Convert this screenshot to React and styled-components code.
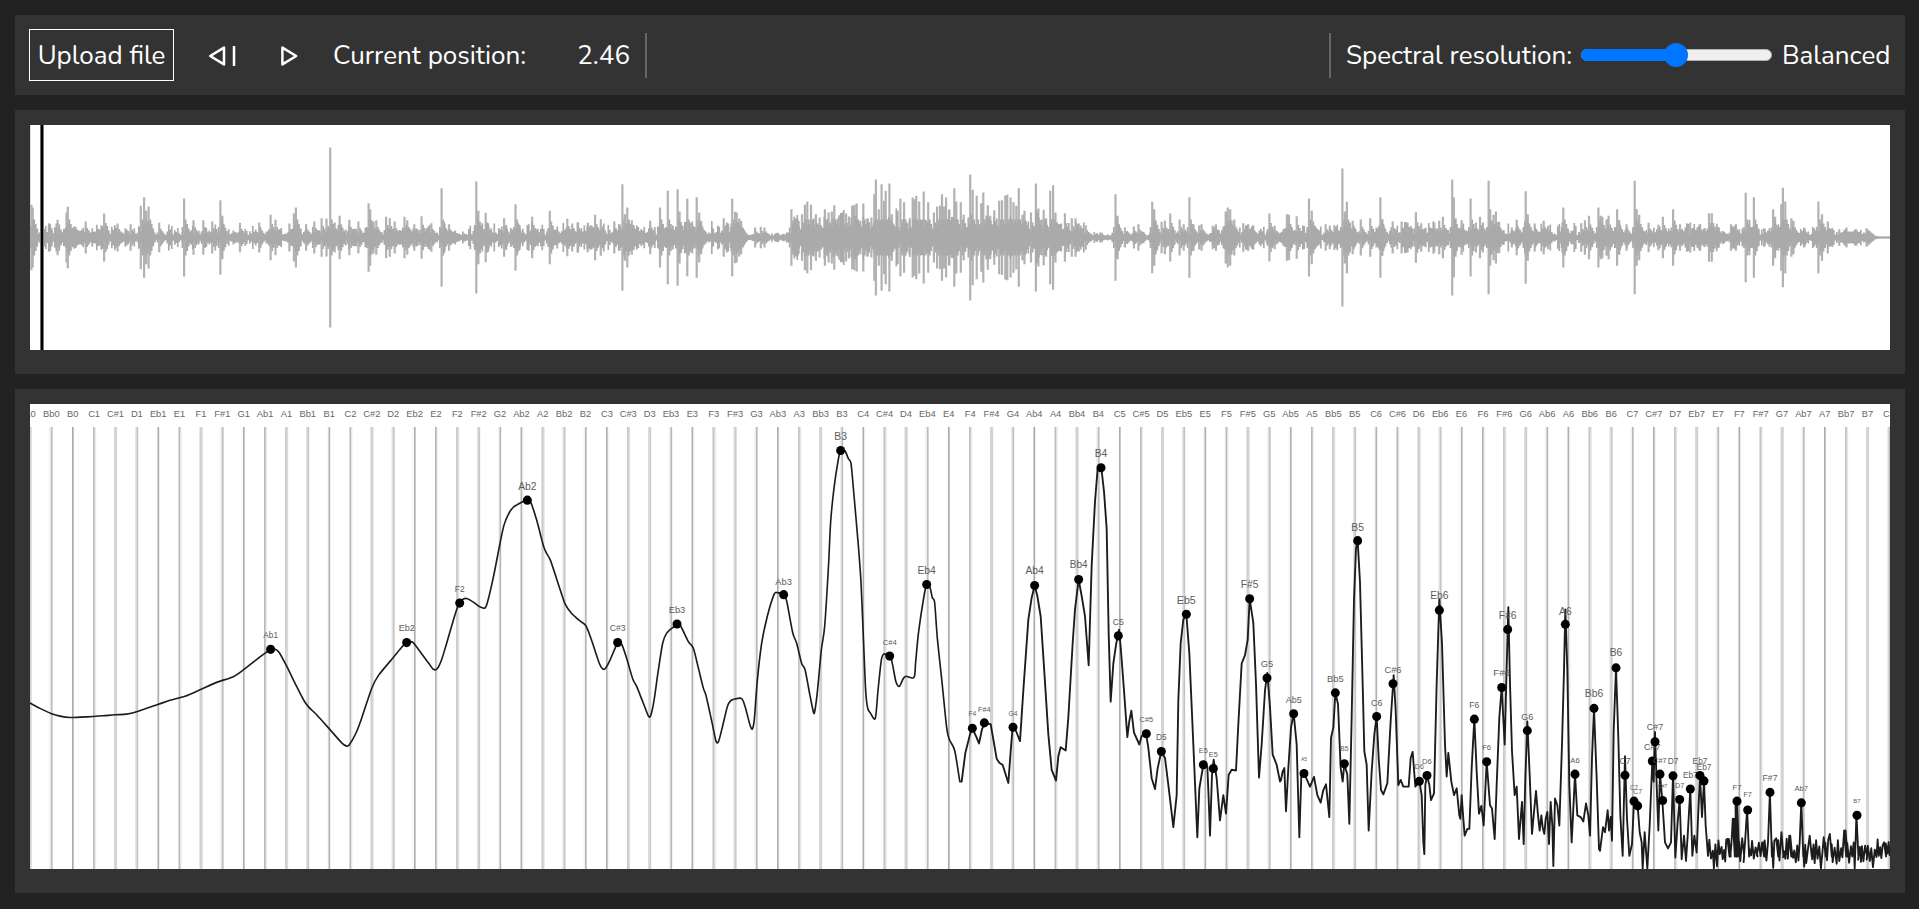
import React from "react";
import styled, { createGlobalStyle } from "styled-components";

const GlobalStyle = createGlobalStyle`
  * { box-sizing: border-box; }
  body {
    margin: 0;
    background: #222;
    color: #fff;
    font-family: Nunito, Lato, "Open Sans", sans-serif;
    font-size: 26px;
    overflow: hidden;
  }
`;

const Page = styled.main`
  display: flex;
  flex-direction: column;
  gap: 15px;
  height: 909px;
  padding: 15px 14px 16px 15px;
`;

const Toolbar = styled.header`
  display: flex;
  align-items: center;
  justify-content: space-between;
  height: 80px;
  padding: 0 16px 0 14px;
  background: #333;
  white-space: nowrap;
`;

const Group = styled.div`
  display: flex;
  align-items: center;
  height: 52px;
`;

const UploadButton = styled.button`
  width: 145px;
  height: 52px;
  padding: 0;
  border: 1px solid #fff;
  background: transparent;
  color: inherit;
  font: inherit;
`;

const IconButton = styled.button`
  display: flex;
  align-items: center;
  justify-content: center;
  width: ${(p) => p.$width}px;
  height: 52px;
  margin-left: ${(p) => p.$gap}px;
  padding: 2px 0 0;
  border: 0;
  background: transparent;
  color: inherit;
`;

const Label = styled.span`
  display: inline-block;
  width: ${(p) => p.$width}px;
  margin-left: ${(p) => p.$gap}px;
  text-align: ${(p) => p.$align || "left"};
`;

const Divider = styled.span`
  width: 2px;
  height: 45px;
  margin-left: ${(p) => p.$gap || 0}px;
  background: #666;
`;

const Slider = styled.div`
  display: flex;
  align-items: center;
  width: 191px;
  height: 12px;
  margin-left: 9px;
  border: 1px solid #b2b2b2;
  border-radius: 6px;
  background: #efefef;
`;

const SliderFill = styled.div`
  width: 50%;
  flex: none;
  height: 12px;
  margin-left: -1px;
  border-radius: 6px 0 0 6px;
  background: #0075ff;
`;

const SliderThumb = styled.div`
  width: 24px;
  height: 24px;
  flex: none;
  margin-left: -12px;
  border-radius: 50%;
  background: #0075ff;
`;

const Panel = styled.section`
  padding: 15px 15px 24px;
  background: #333;
`;

const Canvas = styled.svg`
  display: block;
  width: 1860px;
  height: ${(p) => p.$height}px;
  background: #fff;
  font-family: "Liberation Sans", Arial, sans-serif;
`;

function random(seed) {
  let s = seed;
  return () => {
    s = (s * 1664525 + 1013904223) % 4294967296;
    return s / 4294967296;
  };
}

/* Transients of the recording: position and amplitude, in three slices. */
const SLICES = [
  [0, "77,98 80,90 166,92 163,75 141,53 120,42 210,48 255,72 288,42 320,40 345,95 353,121 358,80 364,93 368,50 390,44 451,117 474,52 498,52 520,48 540,112 545,65 588,44 635,45 663,68 675,53 709,42 720,72 725,90 750,40 770,48 788,58 800,57 809,270 820,45 832,65 856,53 878,48 903,103 907,85 915,48 922,52 946,62 955,58 967,48 991,62 998,52 1015,40 1033,64 1057,43 1082,148 1088,47 1100,40 1167,168 1172,80 1190,74 1235,58 1263,100 1268,45 1304,62 1347,80 1390,56 1402,42 1415,46 1440,44 1458,68 1472,55 1505,48 1518,40 1525,160 1531,70 1537,90 1548,52"],
  [640, "25,50 49,90 68,140 92,145 97,78 116,116 124,45 139,121 145,75 150,50 205,58 226,116 233,77 237,75 243,57 248,50 282,30 296,32 305,30 371,85 378,52 386,55 397,70 404,98 410,107 419,98 431,70 440,60 453,85 462,75 470,78 476,97 488,67 496,70 505,72 512,63 520,95 525,98 531,102 540,50 547,102 557,58 567,60 574,130 578,174 585,85 592,160 598,110 602,140 611,162 617,70 638,116 647,106 660,50 668,120 673,115 677,125 684,108 695,138 706,106 720,75 728,93 735,95 740,130 745,93 750,120 758,85 765,60 770,148 775,108 786,106 793,68 809,189 815,143 825,125 836,103 841,135 852,97 858,65 868,82 880,110 887,112 895,126 900,128 908,120 915,106 922,95 928,148 937,68 942,80 958,75 970,162 976,87 989,83 997,38 1005,140 1012,157 1018,75 1030,40 1041,73 1058,58 1067,58 1075,42 1092,37 1165,130 1170,65 1188,30 1210,33 1221,40 1255,107 1260,85 1278,47 1286,50 1299,72 1322,54 1332,40 1346,121 1356,40 1370,36 1376,40 1403,35 1411,40 1435,78 1440,90 1446,85 1456,54 1478,43 1490,40 1502,35 1542,72 1555,35"],
  [1280, "17,70 22,68 41,64 71,117 78,80 88,30 112,40 122,35 153,207 159,78 164,107 171,45 178,50 198,54 221,58 246,121 251,55 276,48 298,48 333,76 346,43 378,45 390,50 399,62 422,174 426,120 430,58 445,52 467,117 480,45 490,62 497,45 511,170 515,85 523,68 529,78 537,47 568,30 580,53 602,139 607,70 624,42 646,50 657,35 694,90 738,43 747,52 757,65 780,90 786,65 790,62 800,55 805,65 826,85 831,52 849,40 869,170 874,85 880,68 903,44 927,38 938,62 963,85 980,40 1005,45 1028,40 1051,73 1058,73 1075,30 1105,40 1117,40 1141,134 1150,53 1161,121 1186,28 1208,85 1213,62 1228,100 1232,149 1238,108 1253,58 1258,50 1285,28 1319,108 1328,70 1342,48 1370,25 1388,30 1412,25 1437,28 1455,8"],
];

function parse(text) {
  return text.trim().split(/\s+/).map((p) => p.split(",").map(Number));
}

const CENTER = 112.5;

function bar(x, a) {
  return `M${x.toFixed(1)} ${(CENTER - a).toFixed(1)}V${(CENTER + a).toFixed(1)}`;
}

function transientPath() {
  let d = "";
  SLICES.forEach(([start, text]) =>
    parse(text).forEach(([x, a]) => {
      d += bar(start + x / 2.45 - 30, a / 3);
    })
  );
  return d;
}

/* Short decay that surrounds each transient. */
function decayPath() {
  let d = "";
  SLICES.forEach(([start, text]) =>
    parse(text).forEach(([x, a]) => {
      const px = start + x / 2.45 - 30;
      const level = Math.min(a / 3, 30);
      d += bar(px - 1.7, level * 0.35) + bar(px + 1.6, level * 0.6) + bar(px + 3.1, level * 0.45) + bar(px + 4.6, level * 0.3);
    })
  );
  return d;
}

/* Quiet and dense stretches of the recording: [from x, lowest, highest]. */
const FLOOR = [
  [0, 2.5, 15], [118, 2, 5], [136, 2.5, 12], [440, 3, 16], [705, 2, 9], [717, 2, 5],
  [762, 4, 26], [1025, 3, 15], [1055, 2, 7], [1180, 2.5, 12], [1260, 2, 5],
  [1270, 2.5, 14], [1328, 2, 5], [1342, 2.5, 15], [1550, 2, 5], [1562, 2.5, 14],
  [1805, 2, 8], [1843, 1, 2], [1846, 0.7, 0.8],
];

function floorPath() {
  const rnd = random(41);
  let d = "";
  let swell = 1;
  let n = 0;
  for (let x = 0.75; x < 1860; x += 1.5) {
    const [, lo, hi] = FLOOR.filter((f) => f[0] <= x).pop();
    if (n++ % 4 === 0) swell = 0.55 + rnd() * 0.6;
    const a = lo + (hi - lo) * swell * Math.pow(rnd(), 1.15);
    d += bar(x, a);
  }
  return d;
}

function Waveform() {
  return (
    <Canvas $height={225} viewBox="0 0 1860 225">
      <path d="M0.5 0V112" stroke="#ddd" />
      <path d="M0 112.5H1860" stroke="#aaa" strokeWidth="3" strokeOpacity="0.6" />
      <path d={floorPath()} stroke="#aaa" strokeWidth="1.7" />
      <path d={decayPath()} stroke="#aaa" strokeWidth="1.7" />
      <path d={transientPath()} stroke="#aaa" strokeWidth="2.2" strokeOpacity="0.9" />
      <rect x="10" width="4" height="225" fill="#888" />
      <rect x="10.8" width="2.3" height="225" fill="#000" />
    </Canvas>
  );
}

/* Magnitude curve, in sections of [x origin, points]. */
const SMOOTH = [
  [0, "90,957 120,973 155,989 180,996 210,1000 240,999 280,997 310,995 345,992 380,990 410,983 475,961 510,949 555,937 602,917 650,896 700,879 730,859 775,824 800,806 812,798 826,798 838,808 860,848 890,908 915,955 930,973 950,992 990,1036 1025,1075 1040,1085 1048,1081 1068,1046 1085,1002 1115,914 1135,876 1180,822 1205,792 1220,778 1236,776 1246,786 1285,838 1300,857 1312,855 1325,828 1340,780 1360,712 1372,675 1379,661 1390,649 1402,648 1420,658 1436,670"],
  [1440, "0,672 14,676 22,660 40,585 60,484 72,430 85,398 100,377 125,362 142,356 152,362 170,415 190,490 200,514 212,536 240,620 256,665 275,692 300,714 318,729 335,772 358,840 368,856 376,855 390,830 405,795 413,778 425,783 440,825 458,885 470,908 490,958 505,995 512,995 522,950 535,860 548,780 560,750 580,732 592,723 602,729 625,775 640,795 655,853 670,913 678,935 695,1010 708,1070 716,1070 728,1025 742,968 752,950 765,945 785,944 795,967 810,1022 817,1034 823,1005 832,890 845,780 862,700 882,636 892,630 911,636 920,655 938,748 950,780 965,840 975,858 990,935 1000,983 1004,983 1012,925 1024,800 1034,730 1045,560 1052,420 1062,320 1075,235 1082,209 1095,210 1105,233 1113,247 1120,320 1135,490 1143,600 1150,760 1157,920 1163,972 1172,988 1186,1002 1194,920 1204,830 1212,812 1230,818 1238,845 1248,895 1258,908 1268,888 1277,878 1302,881 1307,835 1316,745 1332,640 1340,606 1350,615 1357,645 1364,660 1372,765 1386,895 1400,1030 1408,1065 1424,1098 1439,1188"],
];

const SHARP = [
  [2880, "0,1190 5,1190 16,1105 30,1050 37,1032 48,1055 57,1077 66,1035 74,1016 92,1020 100,1065 110,1122 118,1134 128,1141 145,1194 152,1100 158,1028 168,1040 180,1070 190,920 205,710 215,645 224,609 232,640 242,700 252,850 265,1050 275,1155 288,1187 295,1115 302,1088 317,1098 325,1000 338,780 345,680 356,591 365,640 375,700 386,845 395,550 405,360 413,262 424,260 432,330 440,440 446,750 452,953 460,840 468,785 477,740 482,790 492,920 502,1058 508,1010 514,980 522,1045 538,1080 545,1055 558,1047 565,1090 575,1180 585,1212 593,1150 604,1101 615,1120 625,1200 640,1325 650,1230 655,950 662,780 670,710 679,694 688,810 700,1080 712,1355 718,1210 730,1140 742,1145 746,1240 750,1350 756,1170 761,1125 770,1180 780,1305 790,1230 798,1285 806,1170 815,1155 828,1157 835,1020 845,840 855,815 863,770 869,648 880,720 888,900 897,1178 905,1080 915,920 922,868 930,970 938,1110 950,1140 960,1190"],
  [3840, "3,1185 8,1160 13,1150 18,1278 25,1150 33,1030 41,988 50,1080 58,1355 64,1170 72,1165 90,1205 102,1176 112,1230 122,1252 130,1215 138,1198 148,1295 153,1060 160,1030 166,927 174,960 182,1150 188,1190 193,1137 202,1170 208,1315 215,1000 222,650 228,500 233,476 240,600 248,900 253,1100 260,1140 266,1335 275,1160 283,1050 290,997 296,1120 303,1215 310,1228 322,1195 332,1010 341,875 347,980 355,1200 362,1185 370,1205 386,1205 392,1120 398,1102 406,1205 418,1188 425,1230 430,1370 433,1405 436,1200 441,1172 448,1200 453,1245 462,1225 470,900 478,650 486,780 495,1080 500,1175 505,1105 514,1190 522,1230 530,1210 538,1290 541,1300 545,1230 550,1300 554,1350 562,1330 568,1330 575,1150 583,1004 590,1160 597,1285 604,1262 611,1320 620,1130 630,1260 636,1270 644,1360 650,1200 658,1000 665,911 674,1080 680,850 685,673 690,900 696,1100 704,1230 710,1205 717,1360 721,1310 726,1250 731,1375 736,1180 742,1012 749,1170 756,1345 762,1280 768,1218 774,1290 779,1335 784,1290 788,1325 793,1345 797,1300 802,1280 807,1375 812,1250 817,1320 820,1440 825,1240 832,1260 838,1320 846,1080 852,860 856,680 862,860 868,1200 875,1370 880,1270 885,1168 892,1290 902,1295 910,1308 918,1255 925,1290 930,1350 936,1120 942,973 950,1180 957,1390"],
  [4797, "3,1395 12,1325 18,1340 26,1275 30,1335 35,1295 39,1365 44,1040 51,853 58,1060 64,1290 71,1410 78,1115 84,1300 91,1410 99,1375 105,1248 116,1262 122,1340 128,1370 131,1448 137,1340 145,1448 152,1320 160,1128 164,1190 168,1043 173,1200 178,1335 183,1168 190,1246 198,1370 207,1388 216,1370 222,1172 229,1415 236,1310 242,1243 248,1420 255,1350 261,1425 266,1350 274,1212 280,1410 286,1350 293,1400 297,1300 303,1172 309,1295 315,1188 320,1320 327,1410"],
];

/* Narrow peaks that stand out of the noise floor at the high end. */
const NOISE_PEAKS = [
  [388, 1360], [403, 1300], [409, 1262], [414, 1248], [430, 1358], [446, 1273], [470, 1385], [490, 1370], [513, 1222],
  [531, 1358], [545, 1340], [573, 1350], [607, 1252], [632, 1350], [675, 1355],
  [693, 1345], [737, 1335], [774, 1289], [800, 1380], [855, 1370],
];

function shift([origin, text]) {
  return parse(text).map(([x, y]) => [origin + x, y]);
}

function smoothPath() {
  const s = SMOOTH.flatMap(shift);
  let d = `M${s[0]}`;
  for (let i = 0; i < s.length - 1; i++) {
    const a = s[Math.max(i - 1, 0)];
    const b = s[i];
    const c = s[i + 1];
    const e = s[Math.min(i + 2, s.length - 1)];
    const k = 7;
    d += `C${b[0] + (c[0] - a[0]) / k} ${b[1] + (c[1] - a[1]) / k} ${c[0] - (e[0] - b[0]) / k} ${c[1] - (e[1] - b[1]) / k} ${c[0]} ${c[1]}`;
  }
  return d;
}

function sharpPath() {
  let d = "M2879 1188";
  SHARP.flatMap(shift).forEach(([x, y]) => {
    d += `L${x} ${y}`;
  });
  const rnd = random(7);
  let up = true;
  for (let x = 331; x < 876; x += 2.8 + rnd() * 3.4) {
    const peak = NOISE_PEAKS.find((p) => Math.abs(p[0] - x) < 3.1);
    const deep = rnd() > 0.75 ? 14 : 0;
    const y = peak ? peak[1] : up ? 1397 - rnd() * 38 : 1402 + rnd() * 32 + deep;
    d += `L${(4797 + x).toFixed(1)} ${y.toFixed(1)}`;
    if (peak) d += `L${(4797 + x + 6).toFixed(1)} 1412`;
    up = !up;
  }
  return d;
}

/* Detected notes: [name, x, y, label size, label baseline]. */
const NOTES = [
  ["Ab1", 812, 798, 25, 765], ["Eb2", 1220, 778, 27, 743], ["F2", 1379, 661, 25, 629],
  ["Ab2", 1582, 356, 31, 325], ["C#3", 1853, 778, 26, 743], ["Eb3", 2031, 723, 28, 690],
  ["Ab3", 2351, 636, 28, 606], ["B3", 2522, 209, 31, 179], ["C#4", 2669, 818, 23, 784],
  ["Eb4", 2780, 606, 31, 574], ["F4", 2917, 1032, 20, 997], ["F#4", 2953, 1016, 22, 984],
  ["G4", 3039, 1029, 20, 997], ["Ab4", 3104, 609, 31, 575], ["Bb4", 3236, 591, 30, 557],
  ["B4", 3303, 260, 31, 228], ["C5", 3355, 758, 26, 726], ["C#5", 3439, 1048, 22, 1014],
  ["D5", 3484, 1101, 25, 1068], ["Eb5", 3559, 694, 32, 664], ["E5", 3610, 1140, 22, 1104],
  ["E5", 3640, 1151, 22, 1117], ["F#5", 3749, 648, 31, 615], ["G5", 3801, 883, 28, 851],
  ["Ab5", 3881, 989, 27, 957], ["A5", 3912, 1166, 15, 1130], ["Bb5", 4006, 927, 28, 894],
  ["B5", 4033, 1137, 20, 1099], ["B5", 4073, 476, 31, 447], ["C6", 4130, 997, 27, 966],
  ["C#6", 4179, 900, 28, 869], ["D6", 4258, 1189, 21, 1153], ["D6", 4281, 1172, 23, 1139],
  ["Eb6", 4318, 682, 31, 650], ["F6", 4423, 1005, 26, 971], ["F6", 4460, 1131, 23, 1096],
  ["F#6", 4505, 911, 29, 877], ["F#6", 4523, 739, 31, 708], ["G6", 4582, 1039, 27, 1006],
  ["A6", 4696, 724, 31, 695], ["A6", 4725, 1168, 23, 1135], ["Bb6", 4782, 973, 31, 940],
  ["B6", 4848, 853, 31, 819], ["C7", 4875, 1171, 26, 1139], ["C7", 4902, 1248, 19, 1214],
  ["C7", 4913, 1262, 21, 1228], ["C#7", 4957, 1129, 27, 1096], ["C#7", 4965, 1072, 27, 1037],
  ["C#7", 4980, 1168, 22, 1135], ["C#7", 4988, 1246, 15, 1210], ["D7", 5019, 1173, 25, 1139],
  ["D7", 5039, 1243, 22, 1210], ["Eb7", 5071, 1212, 25, 1179], ["Eb7", 5100, 1172, 25, 1139],
  ["Eb7", 5112, 1188, 25, 1157], ["F7", 5211, 1248, 23, 1214], ["F7", 5243, 1274, 22, 1237],
  ["F#7", 5310, 1222, 26, 1188], ["Ab7", 5404, 1253, 23, 1219], ["B7", 5571, 1290, 18, 1254],
];

const NAMES = ["A", "Bb", "B", "C", "C#", "D", "Eb", "E", "F", "F#", "G", "Ab"];
const GRID = Array.from({ length: 88 }, (_, k) => ({
  name: NAMES[k % 12] + Math.floor((k + 9) / 12),
  x: 90 + k * 64.1,
}));

/* A grid line shares its weight between the two canvas columns it touches. */
function GridLine({ x }) {
  const column = (x - 90) / 4.5 - 0.5;
  const left = Math.floor(column);
  const part = column - left;
  const start = 90 + left * 4.5;
  return (
    <g fill="#aaa">
      <rect x={start} y="139" width="5" height="1320" opacity={1 - part} />
      <rect x={start + 4.5} y="139" width="5" height="1320" opacity={part} />
    </g>
  );
}

function Spectrum() {
  return (
    <Canvas $height={465} viewBox="90 71 5580 1378" preserveAspectRatio="none">
      {GRID.map((g) => (
        <GridLine key={g.name} x={g.x} />
      ))}
      <g fill="#666" fontSize="28" textAnchor="middle">
        {GRID.map((g) => (
          <text key={g.name} x={g.x} y="111">{g.name}</text>
        ))}
      </g>
      <g fill="none" stroke="#1c1c1c" strokeLinejoin="round">
        <path d={smoothPath()} strokeWidth="4.9" />
        <path d={sharpPath()} strokeWidth="5.6" />
      </g>
      {NOTES.map(([name, x, y, size, base]) => (
        <g key={`${name}-${x}`}>
          <circle cx={x} cy={y} r="13.5" fill="#000" />
          <text x={x} y={base} fontSize={size} textAnchor="middle" fill="#5c5c5c">{name}</text>
        </g>
      ))}
    </Canvas>
  );
}

function RewindIcon() {
  return (
    <svg width="28" height="22" viewBox="0 0 28 22" fill="none" stroke="#fff" strokeWidth="2.5">
      <path d="M16 2.6V19.4L2.2 11Z" strokeLinejoin="round" />
      <path d="M26 1V21" />
    </svg>
  );
}

function PlayIcon() {
  return (
    <svg width="19" height="22" viewBox="0 0 19 22" fill="none" stroke="#fff" strokeWidth="2.5">
      <path d="M2.4 2.6V19.4L16.2 11Z" strokeLinejoin="round" />
    </svg>
  );
}

export default function App() {
  return (
    <>
      <GlobalStyle />
      <Page>
        <Toolbar>
          <Group>
            <UploadButton>Upload file</UploadButton>
            <IconButton $width={28} $gap={34} aria-label="Rewind"><RewindIcon /></IconButton>
            <IconButton $width={19} $gap={44} aria-label="Play"><PlayIcon /></IconButton>
            <Label $width={196} $gap={34}>Current position:</Label>
            <Label $width={90} $gap={11} $align="right">2.46</Label>
            <Divider $gap={15} />
          </Group>
          <Group>
            <Divider />
            <Label $width={226} $gap={15}>Spectral resolution:</Label>
            <Slider><SliderFill /><SliderThumb /></Slider>
            <Label $width={107} $gap={10}>Balanced</Label>
          </Group>
        </Toolbar>
        <Panel><Waveform /></Panel>
        <Panel><Spectrum /></Panel>
      </Page>
    </>
  );
}
